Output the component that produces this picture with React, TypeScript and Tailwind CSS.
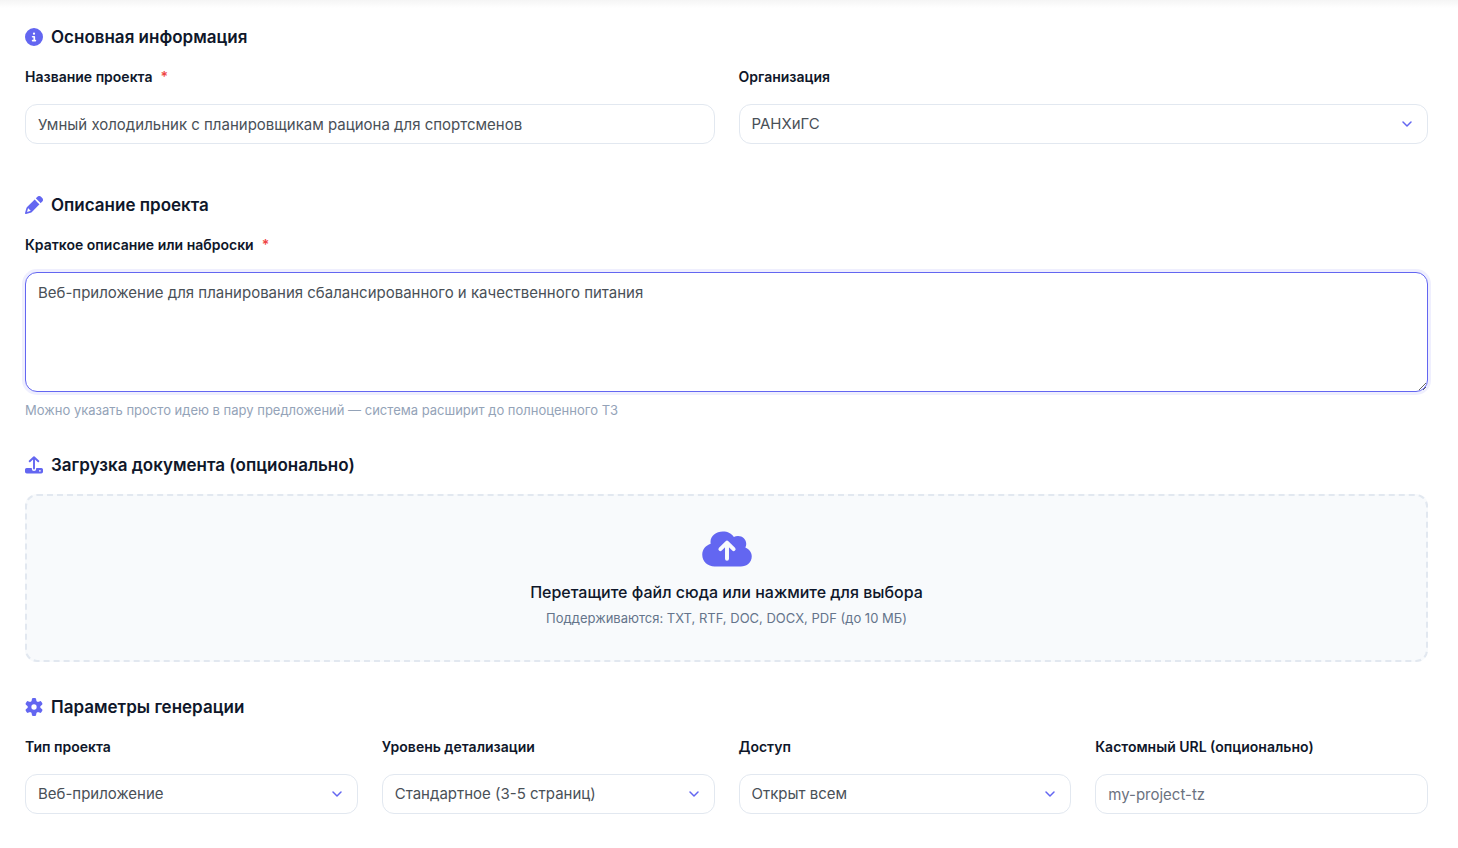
import { useState } from "react";
import type { ReactNode } from "react";
import { FaCircleInfo } from "react-icons/fa6";

const control =
  "block w-full rounded-xl border border-[#e2e8f0] bg-white px-3 text-[15px] text-[#495057] outline-none focus:border-[#6366f1]";

function PencilIcon() {
  return (
    <svg className="size-[18px]" viewBox="0 0 512 512" fill="currentColor" fillRule="evenodd" aria-hidden="true">
      <path d="M36.4 353.2c4.1-14.6 11.8-27.9 22.6-38.7l181.2-181.2 33.9-33.9c16.6 16.6 51.3 51.3 104 104l33.9 33.9-33.9 33.9-181.2 181.2c-10.7 10.7-24.1 18.5-38.7 22.6L30.4 510.6c-8.3 2.3-17.3 0-23.4-6.2S-1.4 489.3.9 481L36.4 353.2zm55.6-3.7c-4.4 4.7-7.6 10.4-9.3 16.6l-24.1 86.9 86.9-24.1c6.4-1.8 12.2-5.1 17-9.7L92 349.5z" />
      <path d="M446 203.4c-16.6-16.6-51.3-51.3-104-104L308 65.5C334.5 39 349.4 24.1 352.8 20.7 366.4 7.1 384.8-.5 404-.5s37.6 7.6 51.2 21.2l35.7 35.7c13.6 13.5 21.2 31.9 21.2 51.1s-7.6 37.6-21.2 51.2c-3.4 3.4-18.3 18.3-44.9 44.7z" />
    </svg>
  );
}

function UploadIcon() {
  return (
    <svg className="size-[18px]" viewBox="0 0 18 18" fill="none" aria-hidden="true">
      <path
        d="M9 1.4V12.6M4.7 5.3 9 1.2l4.3 4.1"
        stroke="currentColor"
        strokeWidth="1.9"
        strokeLinecap="round"
        strokeLinejoin="round"
      />
      <path
        fill="currentColor"
        fillRule="evenodd"
        d="M1.6 12h5.2v.8a2.2 2.2 0 0 0 4.4 0V12h5.2A1.6 1.6 0 0 1 18 13.6v2.2a1.8 1.8 0 0 1-1.8 1.8H1.8A1.8 1.8 0 0 1 0 15.8v-2.2A1.6 1.6 0 0 1 1.6 12zm13.3 2a.85.85 0 1 0 0 1.7.85.85 0 0 0 0-1.7z"
      />
    </svg>
  );
}

function CloudIcon() {
  return (
    <svg className="h-11 w-[50px] text-[#6366f1]" viewBox="0 0 576 512" fill="none" aria-hidden="true">
      <path
        fill="currentColor"
        d="M144 448c-79.5 0-144-57-144-136 0-63.4 41-108.2 97.9-127.5-1.3-7.7-1.9-15.5-1.9-23.5C96 92 160.500 40 240 40c55.400 0 103.500 21.300 127.600 66.100C381.800 97.800 398.400 94 416 94c53 0 96 40 96 92 0 15.700-3.800 26.600-10.500 39.700C545.500 246 576 280.400 576 328c0 70.700-57.300 120-128 120H144z"
      />
      <path
        d="M288 176V358M211 247l77-77 77 77"
        stroke="#f8fafc"
        strokeWidth="46"
        strokeLinecap="round"
        strokeLinejoin="round"
      />
    </svg>
  );
}

function GearIcon() {
  return (
    <svg className="size-[18px]" viewBox="0 -16 512 544" fill="currentColor" fillRule="evenodd" aria-hidden="true">
      <path d="M195.1 9.5C198.1-5.3 211.2-16 226.4-16l59.8 0c15.2 0 28.3 10.7 31.3 25.5L332 79.5c14.1 6 27.3 13.7 39.3 22.8l67.8-22.5c14.4-4.8 30.2 1.2 37.8 14.4l29.9 51.8c7.6 13.2 4.900 29.800-6.500 39.900L447 233.300c.9 7.400 1.300 15 1.300 22.700s-.5 15.300-1.300 22.700l53.400 47.500c11.400 10.100 14 26.800 6.500 39.900l-29.900 51.800c-7.600 13.100-23.400 19.200-37.800 14.400l-67.800-22.500c-12.100 9.100-25.300 16.700-39.300 22.800l-14.400 69.900c-3.100 14.900-16.200 25.500-31.300 25.500l-59.800 0c-15.200 0-28.300-10.700-31.300-25.500l-14.400-69.900c-14.100-6-27.200-13.700-39.300-22.800L73.500 432.300c-14.400 4.800-30.200-1.200-37.800-14.400L5.800 366.100c-7.600-13.200-4.900-29.800 6.500-39.900l53.400-47.500c-.9-7.400-1.300-15-1.300-22.700s.5-15.300 1.300-22.700L12.300 185.800c-11.400-10.100-14-26.800-6.500-39.900L35.700 94.100c7.600-13.200 23.400-19.200 37.800-14.400l67.800 22.500c12.100-9.100 25.300-16.700 39.300-22.800L195.100 9.500zM256.300 336a80 80 0 1 0-.6-160 80 80 0 1 0 .6 160z" />
    </svg>
  );
}

function Title({ icon, children }: { icon: ReactNode; children: ReactNode }) {
  return (
    <h2 className="flex items-center gap-2 text-[17px] leading-[26px] font-semibold text-[#0f172a]">
      <span className="text-[#6366f1]">{icon}</span>
      {children}
    </h2>
  );
}

function Label({ id, required, children }: { id: string; required?: boolean; children: ReactNode }) {
  return (
    <label htmlFor={id} className="mb-4 block text-[14px] leading-[22px] font-semibold text-[#0f172a]">
      {children}
      {required && <span className="ml-2 text-[#ef4444]">*</span>}
    </label>
  );
}

function Select({ id, label, options }: { id: string; label: string; options: string[] }) {
  return (
    <div>
      <Label id={id}>{label}</Label>
      <div className="relative">
        <select id={id} className={`${control} h-10 appearance-none pr-10`}>
          {options.map((o) => (
            <option key={o}>{o}</option>
          ))}
        </select>
        <svg
          className="pointer-events-none absolute top-3 right-[13px] size-4 text-[#6366f1]"
          viewBox="0 0 16 16"
          fill="none"
          stroke="currentColor"
          strokeWidth="1.5"
          strokeLinecap="round"
          strokeLinejoin="round"
          aria-hidden="true"
        >
          <path d="m4 6 4 4 4-4" />
        </svg>
      </div>
    </div>
  );
}

export default function App() {
  const [name, setName] = useState("Умный холодильник с планировщикам рациона для спортсменов");
  const [text, setText] = useState("Веб-приложение для планирования сбалансированного и качественного питания");

  return (
    <main className="min-h-screen bg-white font-['Inter',sans-serif]">
      <div className="h-2 bg-linear-to-b from-[#f5f5f5] to-white" />
      <form className="pt-4 pr-[30px] pb-8 pl-[25px]">
        <section>
          <Title icon={<FaCircleInfo size={18} />}>Основная информация</Title>
          <div className="mt-4 grid grid-cols-2 gap-6">
            <div>
              <Label id="name" required>Название проекта</Label>
              <input id="name" className={`${control} h-10`} value={name} onChange={(e) => setName(e.target.value)} />
            </div>
            <Select id="org" label="Организация" options={["РАНХиГС"]} />
          </div>
        </section>

        <section className="mt-12">
          <Title icon={<PencilIcon />}>Описание проекта</Title>
          <div className="mt-4">
            <Label id="description" required>Краткое описание или наброски</Label>
            <textarea
              id="description"
              className="block h-[120px] w-full resize-y rounded-xl border border-[#6366f1] bg-white px-3 py-2 text-[15px] leading-6 text-[#495057] shadow-[0_0_0_3px_rgba(99,102,241,0.1)] outline-none"
              value={text}
              onChange={(e) => setText(e.target.value)}
            />
            <p className="mt-2 text-[13px] leading-5 text-[#94a3b8]">
              Можно указать просто идею в пару предложений — система расширит до полноценного ТЗ
            </p>
          </div>
        </section>

        <section className="mt-8">
          <Title icon={<UploadIcon />}>Загрузка документа (опционально)</Title>
          <button
            type="button"
            className="mt-4 flex h-[168px] w-full flex-col items-center justify-center rounded-xl border-2 border-dashed border-[#e2e8f0] bg-[#f8fafc]"
          >
            <CloudIcon />
            <span className="mt-2 text-[16px] leading-6 font-medium text-[#0f172a]">
              Перетащите файл сюда или нажмите для выбора
            </span>
            <span className="mt-1 text-[13px] leading-5 text-[#64748b]">
              Поддерживаются: TXT, RTF, DOC, DOCX, PDF (до 10 МБ)
            </span>
          </button>
        </section>

        <section className="mt-8">
          <Title icon={<GearIcon />}>Параметры генерации</Title>
          <div className="mt-4 grid grid-cols-4 gap-6">
            <Select id="type" label="Тип проекта" options={["Веб-приложение"]} />
            <Select id="level" label="Уровень детализации" options={["Стандартное (3-5 страниц)"]} />
            <Select id="access" label="Доступ" options={["Открыт всем"]} />
            <div>
              <Label id="url">Кастомный URL (опционально)</Label>
              <input id="url" className={`${control} h-10 placeholder:text-[#6b7280]`} placeholder="my-project-tz" />
            </div>
          </div>
        </section>
      </form>
    </main>
  );
}
